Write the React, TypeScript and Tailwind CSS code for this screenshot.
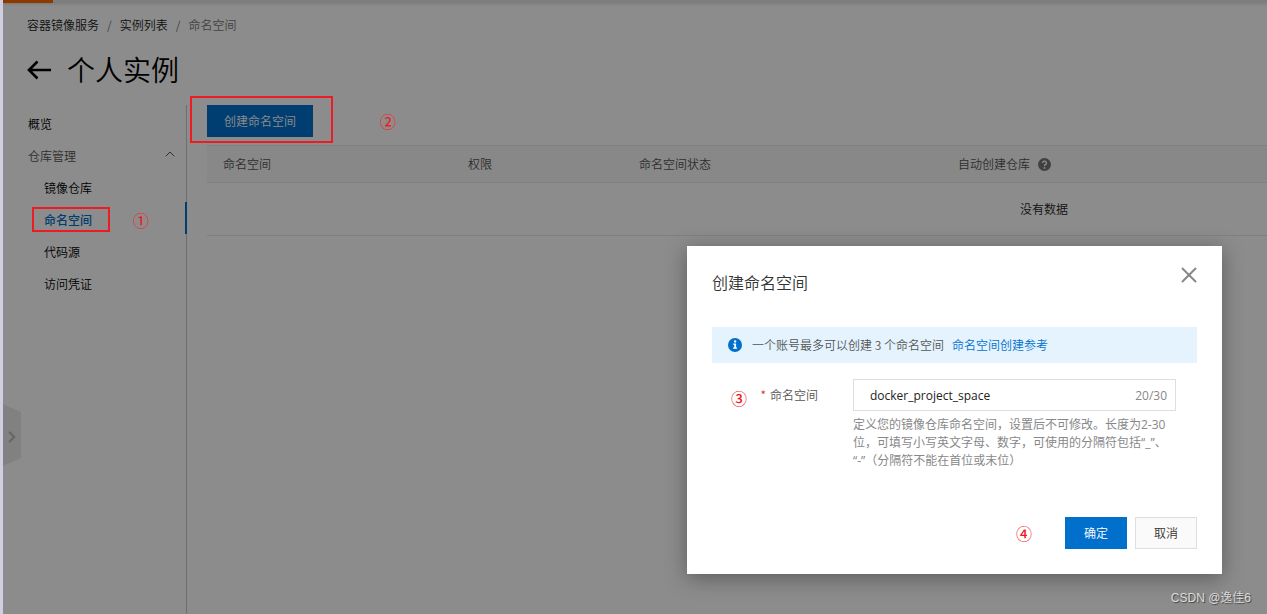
import React, { useState } from "react";
import { ChevronRight, ChevronUp, X } from "lucide-react";

const menu = ["镜像仓库", "命名空间", "代码源", "访问凭证"];

const Mark = ({ children, className }: { children: string; className: string }) => (
  <span
    className={`absolute z-20 text-base leading-4 font-medium text-[#ed1c24] ${className}`}
  >
    {children}
  </span>
);

const Sidebar = () => (
  <nav className="w-[184px] shrink-0 border-r border-[#c8c8c8] pt-px">
    <a href="#overview" className="block h-8 pt-1 pl-[25px] leading-7 text-black">
      概览
    </a>
    <button className="flex h-8 w-full items-center justify-between pt-1 pr-2 pl-[25px] text-[#555]">
      仓库管理
      <ChevronUp size={16} strokeWidth={1.5} className="mb-1" />
    </button>
    <ul>
      {menu.map((item) =>
        item === "命名空间" ? (
          <li key={item} className="relative -mr-px h-8 border-r-2 border-[#0070cc] pt-1 leading-7">
            <a href="#namespace" className="block pl-[41px] font-medium text-[#0070cc]">
              {item}
            </a>
            <div className="absolute top-[5px] left-[29px] z-20 h-[25px] w-[78px] border-2 border-[#ed1c24]"></div>
            <Mark className="top-[10px] left-[130px]">①</Mark>
          </li>
        ) : (
          <li key={item} className="h-8 pt-1 leading-7">
            <a href="#menu" className="block pl-[41px] text-black">
              {item}
            </a>
          </li>
        )
      )}
    </ul>
  </nav>
);

const NamespaceTable = () => (
  <div className="mt-2 overflow-hidden">
    <table className="w-[1674px] table-fixed border-collapse text-left">
      <thead>
        <tr className="h-[37px] border-y border-[#e9e9e9] bg-[#f7f7f7] text-[#555]">
          <th className="w-[245px] pl-4 font-[350]">命名空间</th>
          <th className="w-[171px] pl-4 font-[350]">权限</th>
          <th className="w-[319px] pl-4 font-[350]">命名空间状态</th>
          <th className="pl-4 font-[350]">
            <span className="flex items-center gap-2">
              自动创建仓库
              <svg width="13" height="13" viewBox="0 0 13 13">
                <circle cx="6.5" cy="6.5" r="6.5" fill="#777" />
                <path
                  d="M4.6 5.1a1.9 1.9 0 1 1 2.9 1.6c-.7.4-1 .7-1 1.3"
                  fill="none"
                  stroke="#fff"
                  strokeWidth="1.4"
                />
                <circle cx="6.5" cy="9.9" r=".9" fill="#fff" />
              </svg>
            </span>
          </th>
        </tr>
      </thead>
      <tbody>
        <tr className="h-[53px] border-b border-[#e9e9e9] text-[#222]">
          <td colSpan={4} className="text-center">
            没有数据
          </td>
        </tr>
      </tbody>
    </table>
  </div>
);

const CreateDialog = () => {
  const [name, setName] = useState("docker_project_space");

  return (
    <div
      role="dialog"
      aria-labelledby="dialog-title"
      className="relative w-[535px] bg-white px-[25px] pt-6 pb-[25px] text-[#555] shadow-[0_4px_20px_rgba(0,0,0,0.35)]"
    >
      <button aria-label="关闭" className="absolute top-4 right-5 text-[#888]">
        <X size={26} strokeWidth={1.8} />
      </button>
      <h2 id="dialog-title" className="text-base leading-6 text-[#333]">
        创建命名空间
      </h2>
      <div className="mt-[33px] flex h-9 items-center bg-[#e4f3fe] px-4">
        <svg width="14" height="14" viewBox="0 0 14 14" className="mr-[10px]">
          <circle cx="7" cy="7" r="7" fill="#0070cc" />
          <circle cx="7.1" cy="3.4" r="1.2" fill="#fff" />
          <path d="M5.2 5.6h2.9v4h1v1.2H5.1V9.6h1.1V6.8h-1z" fill="#fff" />
        </svg>
        <span>一个账号最多可以创建 3 个命名空间</span>
        <a href="#guide" className="ml-2 text-[#0070cc]">
          命名空间创建参考
        </a>
      </div>
      <div className="mt-4 flex pr-[21px]">
        <label htmlFor="ns" className="relative h-8 w-[141px] shrink-0 pr-[35px] text-right leading-8">
          <Mark className="top-[11px] left-[19px]">③</Mark>
          <span className="mr-1 text-[#d93026]">*</span>
          命名空间
        </label>
        <div className="min-w-0 flex-1 font-normal font-['Open_Sans','Noto_Sans_CJK_SC',sans-serif]">
          <div className="flex h-8 items-center border border-[#dedede] pt-[2px] pr-2 pl-4">
            <input
              id="ns"
              maxLength={30}
              value={name}
              onChange={(e) => setName(e.target.value)}
              className="min-w-0 flex-1 text-[#222] outline-none"
            />
            <span className="text-[#888]">{name.length}/30</span>
          </div>
          <p className="mt-[5px] leading-[18px] text-[#888] [text-spacing-trim:space-all]">
            定义您的镜像仓库命名空间，设置后不可修改。长度为2-30位，可填写小写英文字母、数字，可使用的分隔符包括“_”、
            <wbr />
            “-”（分隔符不能在首位或末位）
          </p>
        </div>
      </div>
      <div className="relative mt-[47px] flex justify-end gap-2">
        <Mark className="top-2 left-[304px]">④</Mark>
        <button className="h-8 w-[62px] bg-[#0070cc] text-white">确定</button>
        <button className="h-8 w-[62px] border border-[#dedede] bg-[#fafafa] text-[#333]">取消</button>
      </div>
    </div>
  );
};

const App = () => {
  return (
    <div className="relative flex min-h-screen flex-col overflow-hidden border-l-3 border-[#d0cfe2] bg-white text-xs font-[350] font-['Noto_Sans_CJK_SC',sans-serif]">
      <div className="h-[3px] bg-[#e6e6e6] shadow-[0_1px_3px_rgba(0,0,0,0.15)]">
        <div className="h-full w-[50px] bg-[#ff6a00]"></div>
      </div>
      <header className="px-6 pt-3">
        <div className="flex h-5 items-center gap-2 text-[#222]">
          <a href="#acr">容器镜像服务</a>
          <span className="text-[#777]">/</span>
          <a href="#instances">实例列表</a>
          <span className="text-[#777]">/</span>
          <span className="text-[#777]">命名空间</span>
        </div>
        <div className="mt-3 flex h-11 items-center gap-4">
          <button aria-label="返回">
            <svg width="24" height="22" viewBox="0 0 24 22" fill="none" stroke="#000" strokeWidth="2.6">
              <path d="M2 12h22M10.500 3.500L2 12l8.500 8.500" />
            </svg>
          </button>
          <h1 className="text-[28px] leading-10 text-black">个人实例</h1>
        </div>
      </header>
      <div className="mt-[14px] flex flex-1">
        <Sidebar />
        <main className="min-w-0 flex-1 pl-5">
          <div className="relative">
            <button className="h-8 w-[106px] bg-[#0070cc] text-white">创建命名空间</button>
            <div className="absolute -top-[9px] -left-[17px] z-20 h-[47px] w-[143px] border-2 border-[#ed1c24]"></div>
            <Mark className="top-2 left-[173px]">②</Mark>
          </div>
          <NamespaceTable />
        </main>
      </div>

      {/* drawer handle */}
      <button aria-label="展开" className="absolute top-[404px] left-0 h-[62px] w-[18px] text-[#bbb]">
        <svg width="18" height="62" viewBox="0 0 18 62" className="absolute inset-0">
          <path d="M0 0l18 8v46L0 62z" fill="#ececec" />
        </svg>
        <ChevronRight size={18} strokeWidth={3} className="relative mt-1" />
      </button>

      {/* mask */}
      <div className="absolute inset-0 z-10 flex items-start justify-end bg-black/45 pt-[246px] pr-[45px]">
        <CreateDialog />
      </div>
      <div className="absolute right-4 bottom-2 z-20 text-xs leading-4 text-[#ddd] [text-shadow:1px_1px_1px_#444] font-['Liberation_Sans','Noto_Sans_CJK_SC',sans-serif]">
        CSDN @逸佳6
      </div>
    </div>
  );
};

export default App;
